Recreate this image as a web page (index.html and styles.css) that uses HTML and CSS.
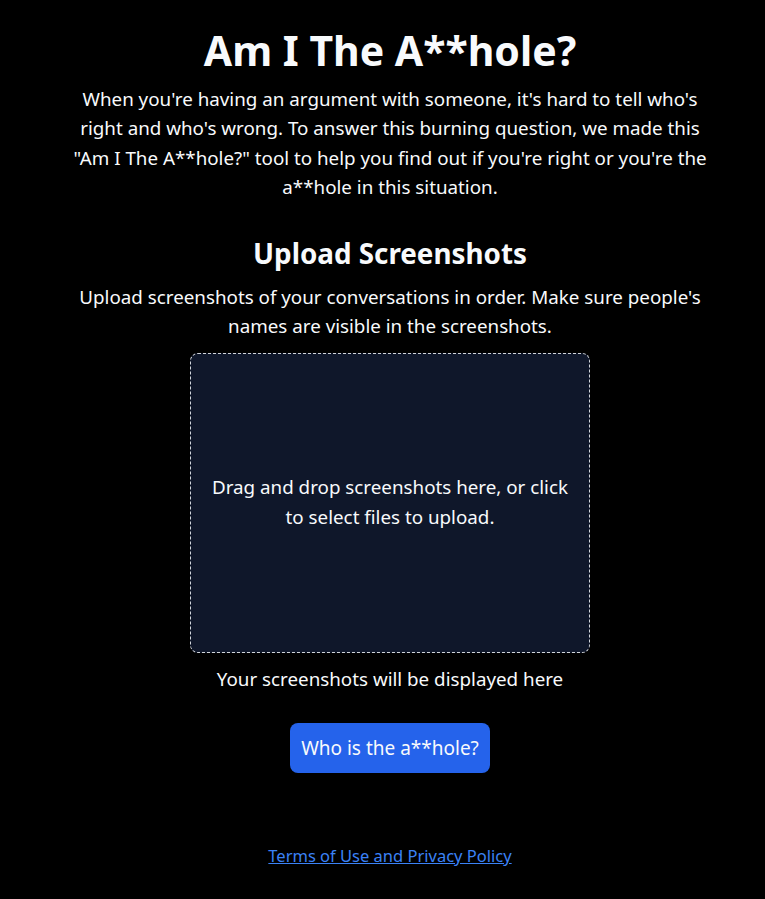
FILE: index.html
```html
<!DOCTYPE html>
<html lang="en">

<head>
    <meta charset="UTF-8">
    <meta name="viewport" content="width=device-width, initial-scale=1.0">
    <title>Am I The A**hole?</title>
    <link rel="stylesheet" href="styles.css">
</head>

<body>
    <main id="app">
        <h1>Am I The A**hole?</h1>
        <p class="intro">When you're having an argument with someone, it's hard to tell who's right and who's wrong. To answer this burning question, we made this "Am I The A**hole?" tool to help you find out if you're right or you're the a**hole in this situation.</p>

        <h2>Upload Screenshots</h2>
        <p class="hint">Upload screenshots of your conversations in order. Make sure people's names are visible in the screenshots.</p>

        <label for="file-input" class="dropzone">
            <span>Drag and drop screenshots here, or click to select files to upload.</span>
        </label>
        <input type="file" id="file-input" multiple accept="image/*">

        <p class="preview">Your screenshots will be displayed here</p>

        <button class="submit-btn">Who is the a**hole?</button>

        <a href="#" class="terms">Terms of Use and Privacy Policy</a>
    </main>
</body>

</html>
```

FILE: styles.css
```css
body {
    font-family: "Noto Sans", Arial, sans-serif;
    background-color: #000;
    color: #f8fafc;
    margin: 0;
    padding: 0;
}

#app {
    display: flex;
    flex-direction: column;
    align-items: center;
    max-width: 660px;
    margin: 0 auto;
    padding: 0 0 40px 15px;
    text-align: center;
}

h1 {
    font-size: 41px;
    line-height: 48px;
    font-weight: 700;
    margin: 26px 0 11px;
}

h2 {
    font-size: 27.8px;
    line-height: 36px;
    font-weight: 700;
    margin: 33px 0 12px;
}

p {
    font-size: 18.8px;
    line-height: 29.25px;
    margin: 0;
    max-width: 642px;
}

.dropzone {
    display: flex;
    align-items: center;
    justify-content: center;
    box-sizing: border-box;
    width: 400px;
    height: 300px;
    margin-top: 11px;
    padding: 0 16px;
    background-color: #0f172a;
    border: 1px dashed #d1d5db;
    border-radius: 8px;
    font-size: 18.8px;
    line-height: 29.25px;
    cursor: pointer;
}

#file-input {
    display: none;
}

.preview {
    margin-top: 12px;
}

.submit-btn {
    margin-top: 29px;
    width: 200px;
    height: 50px;
    background-color: #2563eb;
    color: #f8fafc;
    border: none;
    border-radius: 8px;
    font-family: inherit;
    font-size: 19px;
    cursor: pointer;
}

.submit-btn:hover {
    background-color: #1d4ed8;
}

.terms {
    margin-top: 68px;
    font-size: 16.5px;
    line-height: 29.25px;
    color: #3b82f6;
}
```
